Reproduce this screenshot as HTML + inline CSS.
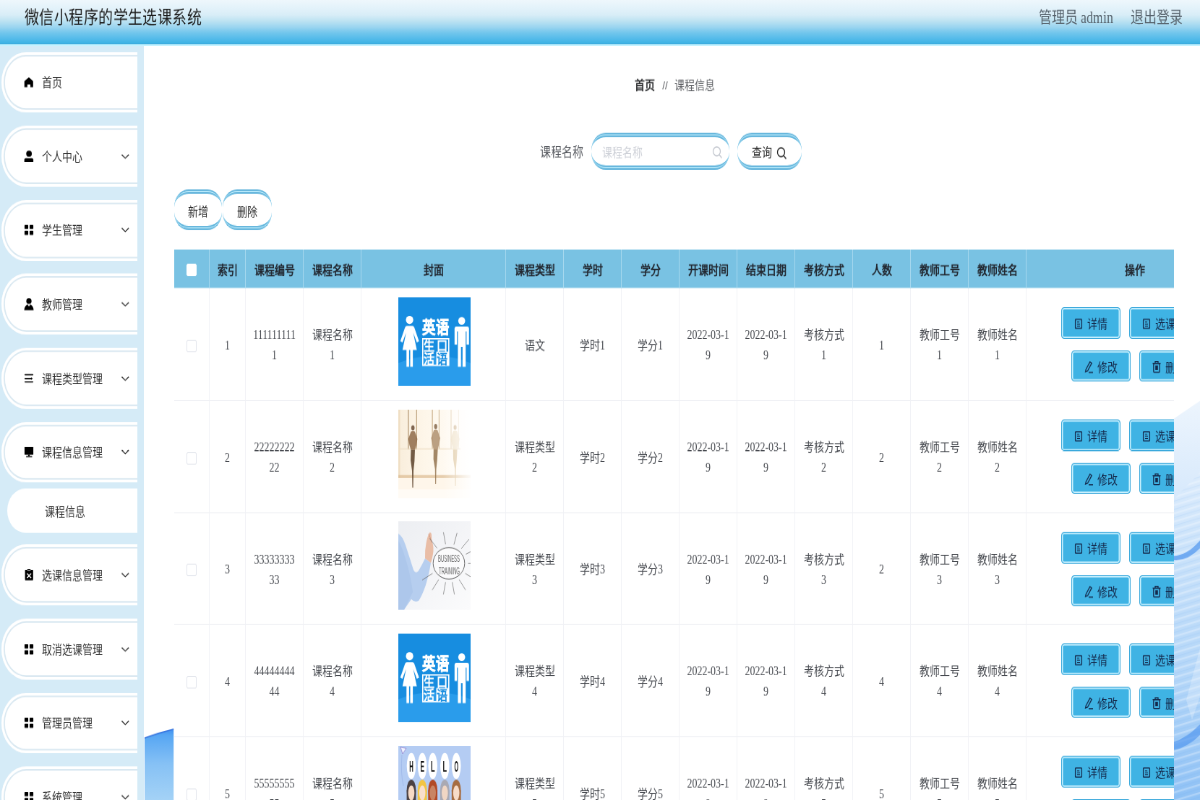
<!DOCTYPE html>
<html lang="zh-CN">
<head>
<meta charset="utf-8">
<title>微信小程序的学生选课系统</title>
<style>
html,body{margin:0;padding:0;width:1200px;height:800px;overflow:hidden;background:#fff;}
body{font-family:"Liberation Serif",serif;color:#333;}
#app{position:absolute;left:0;top:0;width:1660px;height:904px;transform-origin:0 0;transform:scale(0.72289,0.88496);will-change:transform;overflow:hidden;background:#fff;}
.sans{font-family:"Liberation Sans",sans-serif;}

/* header */
#hdr{position:absolute;left:0;top:0;width:1660px;height:50.3px;background:linear-gradient(180deg,#eef7fc 0%,#e3f2fa 18%,#d8edf7 34%,#bee3f2 47%,#9bd5f0 61%,#72c6ec 74%,#57bcea 86%,#3fb3e5 97%,#3aa6d8 100%);border-bottom:2px solid #c4f2ff;z-index:5;}
#hdr .title{position:absolute;left:34px;top:0;height:41px;line-height:41.6px;font-size:20px;letter-spacing:.42px;color:#1c1c1c;white-space:nowrap;}
#hdr .right{position:absolute;right:24px;top:0;height:41px;line-height:41px;font-size:18px;color:#56626c;white-space:nowrap;}
#hdr .right span{margin-left:24px;}

/* sidebar */
#side{position:absolute;left:0;top:51px;width:199px;height:853px;background:#d5ebf7;overflow:hidden;}
#side .menu{position:absolute;left:0;top:0;width:190px;height:853px;overflow:hidden;}
.mi{position:absolute;left:1.8px;width:240px;height:68.8px;box-sizing:border-box;background:#fff;border-radius:34.4px 0 0 34.4px;box-shadow:inset 0 0 0 3px #fff,inset 0 0 0 4.8px #d9e8f1;font-size:14px;color:#333;line-height:70px;white-space:nowrap;}
.mi svg{position:absolute;width:16.6px;height:13.56px;top:27.7px;}
.mi .ic{left:30px;}
.mi .tx{position:absolute;left:56.3px;top:0.5px;}
.mi .ar{left:163.5px;}
.smi{position:absolute;left:10px;width:240px;height:50px;background:#fff;border-radius:25px 0 0 25px;font-size:14px;color:#333;line-height:50px;}
.smi .tx{position:absolute;left:52px;top:1.7px;}

/* main */
#main{position:absolute;left:199px;top:51px;width:1461px;height:853px;background:#fff;overflow:hidden;}


#bgL{position:absolute;left:1.4px;top:770px;width:40.2px;height:90px;}
#bgR{position:absolute;left:1424px;top:380px;width:40px;height:480px;}
/* breadcrumb */
#bc{position:absolute;left:1px;top:32px;width:1467px;text-align:center;font-size:14px;line-height:28px;color:#606266;white-space:nowrap;}
#bc b{color:#303133;font-weight:bold;}
#bc i{font-style:normal;font-family:"Liberation Sans",sans-serif;color:#5f6166;margin:0 9px 0 10px;font-size:13.5px;}

/* search row */
#srch{position:absolute;left:0;top:99.2px;width:1461px;height:42px;}
#srch .lb{position:absolute;left:547.5px;top:1.2px;line-height:42px;font-size:15px;letter-spacing:.2px;color:#55585e;white-space:nowrap;}
.pill{box-sizing:border-box;border-style:double;border-color:#68b7dd;border-width:5.4px 0;border-radius:20px;background:linear-gradient(#fff,#fff) padding-box,linear-gradient(#bfeefd,#bfeefd) border-box;}
#srch .inp{position:absolute;left:618.5px;top:0;width:191.5px;height:42px;}
#srch .inp .ph{position:absolute;left:15px;top:0;line-height:35px;font-size:14px;color:#cdd0d7;font-family:"Liberation Sans",sans-serif;}
#srch .inp svg{position:absolute;left:167px;top:9px;width:15px;height:16px;}
#srch .btn{position:absolute;left:820.5px;top:0;width:89.5px;height:42px;font-family:"Liberation Sans",sans-serif;font-size:14px;color:#222;line-height:35px;}
#srch .btn span{position:absolute;left:20px;top:0;}
#srch .btn svg{position:absolute;left:54px;top:9.6px;width:15px;height:16px;}

/* add / delete */
#ops{position:absolute;left:41.7px;top:163.4px;height:46px;white-space:nowrap;}
#ops .b{position:absolute;top:0;width:66.8px;height:45.7px;font-family:"Liberation Sans",sans-serif;font-size:14px;color:#2a2a2a;line-height:40.5px;text-align:center;}

/* table */
#tw{position:absolute;left:41.5px;top:231.4px;width:1383.5px;height:640px;overflow:hidden;background:#fff;}
table{border-collapse:separate;border-spacing:0;table-layout:fixed;width:1479.6px;}
th,td{box-sizing:border-box;padding:0 10px;text-align:center;font-size:14px;overflow:hidden;}
th{height:44px;background:#79c2e3;color:#222831;font-weight:bold;border-right:1.4px solid #a6d8ee;border-bottom:1px solid #cfe9f5;white-space:nowrap;}
td{height:127px;padding-top:1.6px;color:#46494f;line-height:23px;border-right:1.4px solid #f1f2f6;border-bottom:1.2px solid #eff0f4;word-break:break-all;}
.cb{display:inline-block;box-sizing:border-box;width:14.5px;height:14px;background:#fff;border:1.4px solid #e2e5ec;border-radius:2px;vertical-align:middle;}
th .cb{border-color:#fff;}
tr.h126 td{height:126px;}
td:first-child{padding-top:0;}
td.img{padding:0;}
td.img svg{display:block;margin:0 auto;width:100px;height:100px;position:relative;top:-3.6px;left:1.2px;}
td.op{padding:0;position:relative;}
.ob{position:absolute;box-sizing:border-box;height:35.7px;width:82.5px;background:#3fb3e4;border:1.4px solid #3ba9dc;box-shadow:inset 0 0 0 1.5px #ccf2ff;border-radius:4px;font-family:"Liberation Sans",sans-serif;font-size:14px;color:#14294b;line-height:35.5px;white-space:nowrap;text-align:left;}
.ob svg{position:absolute;left:16.5px;top:10.6px;width:14px;height:15px;}
.ob span{position:absolute;left:35.6px;top:0.9px;}
</style>
</head>
<body>
<div id="app">
<svg width="0" height="0" style="position:absolute"><defs>
<g id="icSearch" fill="none" stroke-width="1.3"><circle cx="6.5" cy="7" r="5"/><path d="M10.2 11 L13.5 14.5"/></g>
<g id="icDoc" fill="none" stroke="#14294b" stroke-width="1.3"><rect x="2.6" y="1.8" width="8.8" height="10.4" rx=".8"/><path d="M5 4.9h3.2M5 7.2h4M5 9.5h4" stroke-width="1"/></g>
<g id="icEdit" fill="none" stroke="#14294b" stroke-width="1.3"><path d="M3.2 10.5 L8.8 1.8 L11.2 3.4 L5.6 12 L2.6 13 Z"/><path d="M7 13.8h6"/></g>
<g id="icDel" fill="none" stroke="#14294b" stroke-width="1.3"><path d="M1.5 3.6h11M5 3.4V1.6h4v1.8"/><rect x="2.8" y="3.6" width="8.4" height="10" rx="1.2"/><rect x="5.2" y="6" width="3.6" height="5" fill="#14294b" stroke="none"/></g>
<g id="icHome"><path d="M5.75 1 L10 5 V11 H7.25 V8.5 H4.25 V11 H1.25 V5 Z" fill="#000"/></g>
<g id="icUser" fill="#000"><ellipse cx="5.9" cy="3.3" rx="2.8" ry="3"/><path d="M1.2 11.9 V9.2 Q1.2 7.7 2.7 7.7 H8.7 Q10.2 7.7 10.2 9.2 V11.9 Z"/></g>
<g id="icGrid" fill="#000"><rect x="1.4" y="0.9" width="3.7" height="4.1" rx=".4"/><rect x="6.5" y="0.9" width="3.7" height="4.1" rx=".4"/><rect x="1.4" y="6.9" width="3.7" height="4.1" rx=".4"/><rect x="6.5" y="6.9" width="3.7" height="4.1" rx=".4"/></g>
<g id="icTeacher" fill="#000"><ellipse cx="5.8" cy="2.9" rx="2.6" ry="2.9"/><path d="M1.1 11.9 C1.2 9 2.4 7.2 4.5 6.2 L5.8 8.4 L7.1 6.2 C9.2 7.2 10.4 9 10.5 11.9 Z"/></g>
<g id="icList" fill="none" stroke="#000" stroke-width="1.3" stroke-linecap="round"><path d="M2 2.3H9.6M2 5.9H8M2 9.4H9.6"/><path d="M8 4.6 L9.6 5.9 L8 7.2 Z" fill="#000" stroke="none"/></g>
<g id="icMon" fill="#000"><rect x="1.4" y="0.8" width="8.8" height="7.9" rx=".5"/><rect x="5" y="8.5" width="1.6" height="1.7"/><rect x="2.9" y="10" width="6.2" height="1.1" rx=".5"/></g>
<g id="icClip"><rect x="1.9" y="0.9" width="8.1" height="10.3" rx=".5" fill="#000"/><rect x="4" y="-0.3" width="3.6" height="1.7" rx=".8" fill="#000" stroke="#fff" stroke-width=".5"/><path d="M3.9 4.5 L8 9 M8 4.5 L3.9 9" stroke="#fff" stroke-width="1.1" fill="none"/></g>
<g id="icChev"><path d="M2.5 4.2 L6 7.8 L9.5 4.2" fill="none" stroke="#333" stroke-width="1"/></g>
<g id="imgA"><rect width="100" height="100" fill="#178de0"/>
<ellipse cx="50" cy="104" rx="80" ry="38" fill="#2a9ceb"/>
<g fill="#fff"><ellipse cx="15.6" cy="25.6" rx="5.1" ry="4.6"/>
<path d="M11.8 32.3 H19.6 Q21.4 32.3 22.2 34.2 L28.6 49.6 L25.7 51 L20.6 40 L25.6 59.6 H20.1 V78.4 H16.5 V59.6 H14.9 V78.4 H11.3 V59.6 H5.8 L10.8 40 L5.7 51 L2.8 49.6 L9.2 34.2 Q10 32.3 11.8 32.3 Z"/>
<ellipse cx="87.7" cy="26.6" rx="4.8" ry="4.3"/>
<path d="M80.2 32.9 H95.4 Q97.8 32.9 97.8 35.3 V53.5 H94.4 V38.5 H93.2 V78.4 H88.9 V56 H86.7 V78.4 H82.4 V38.5 H81.2 V53.5 H77.8 V35.3 Q77.8 32.9 80.2 32.9 Z"/></g>
<g font-family="'Liberation Sans',sans-serif" font-weight="bold" text-anchor="middle">
<text x="42.3" y="41.3" font-size="19.5" fill="#fff" stroke="#fff" stroke-width=".5" textLength="18.6" lengthAdjust="spacingAndGlyphs">英</text>
<text x="61.5" y="41.3" font-size="19.5" fill="#fff" stroke="#fff" stroke-width=".5" textLength="18.6" lengthAdjust="spacingAndGlyphs">语</text>
<rect x="33.8" y="46.8" width="36" height="30" fill="none" stroke="#fff" stroke-width="1.6"/>
<rect x="52.5" y="61.5" width="17.3" height="15.3" fill="#fff"/>
<text x="43" y="60.2" font-size="15" fill="#fff" textLength="15" lengthAdjust="spacingAndGlyphs">生</text>
<text x="61" y="60.2" font-size="15" fill="#fff" textLength="15" lengthAdjust="spacingAndGlyphs">口</text>
<text x="43" y="74.8" font-size="15" fill="#fff" textLength="15" lengthAdjust="spacingAndGlyphs">活</text>
<text x="61" y="74.8" font-size="15" fill="#178de0" textLength="15" lengthAdjust="spacingAndGlyphs">语</text>
</g></g>
<g id="imgB"><rect width="100" height="100" fill="#fffdf9"/>
<linearGradient id="gB1" x1="0" x2="1"><stop offset="0" stop-color="#f6e7cf"/><stop offset=".35" stop-color="#fdf3e2"/><stop offset=".75" stop-color="#fffaf2"/><stop offset="1" stop-color="#ffffff"/></linearGradient>
<rect width="100" height="77" fill="url(#gB1)" opacity=".7"/>
<rect x="0" y="0" width="2.4" height="100" fill="#ecd9bd" opacity=".8"/>
<g stroke-width="1.1"><path d="M13.9 0V45" stroke="#a98a64"/><path d="M25.3 0V45" stroke="#b5976f"/><path d="M47.1 0V44" stroke="#c4a780"/><path d="M56.4 0V44" stroke="#d2ba98"/><path d="M73 0V44" stroke="#e4d1b4"/><path d="M83.4 0V44" stroke="#f0e4cf"/></g>
<rect x="0" y="43.6" width="86" height="1.3" fill="#efdfc4" opacity=".8"/>
<rect x="0" y="73.8" width="100" height="3.2" fill="#dcbb90" opacity=".7"/>
<rect x="0" y="77" width="100" height="23" fill="#fef6ea"/>
<rect x="0" y="90" width="100" height="10" fill="#fffbf5"/>
<g opacity=".85"><ellipse cx="20.2" cy="20.6" rx="2.3" ry="3" fill="#6a4d37"/>
<path d="M17.6 24.6 Q20.2 23.2 22.8 24.6 L26.4 33 L25 40 L23 45.5 H17.4 L15.4 40 L13.8 33 Z" fill="#8f6a48"/>
<path d="M17.4 45.5 H23 L22.4 58 L21 69 L20.6 88 H19.4 L19 69 L17 57 Z" fill="#5a4029"/>
<ellipse cx="51.7" cy="19" rx="2.2" ry="2.9" fill="#86684c"/>
<path d="M49.2 23 Q51.7 21.8 54.2 23 L58 32 L56.2 39.5 L54.6 45 H48.8 L47.2 39.5 L45.4 32 Z" fill="#b09170"/>
<path d="M48.8 45 H54.6 L53.8 57 L52.5 67 L52.2 84 H51.1 L50.8 67 L48.6 56 Z" fill="#94744f"/>
<ellipse cx="78.6" cy="20" rx="2.1" ry="2.8" fill="#cdb38e"/>
<path d="M76 24 Q78.6 22.8 81.2 24 L84.8 33 L83 40 L81.6 45 H75.8 L74.4 40 L72.4 33 Z" fill="#eedfc4"/>
<path d="M75.8 45 H81.6 L80.8 57 L79.7 67 L79.5 86 H78.5 L78.2 67 L76 56 Z" fill="#d9bd90"/></g>
<linearGradient id="gB2" x1="0" x2="1"><stop offset="0" stop-color="#fff" stop-opacity="0"/><stop offset="1" stop-color="#fff" stop-opacity=".9"/></linearGradient>
<rect x="62" y="0" width="38" height="100" fill="url(#gB2)"/>
</g>
<g id="imgC"><rect width="100" height="100" fill="#f4f5f7"/>
<linearGradient id="gC1" x1="0" x2="1" y1="0" y2="1"><stop offset="0" stop-color="#eceef2"/><stop offset="1" stop-color="#fbfbfc"/></linearGradient>
<rect width="100" height="100" fill="url(#gC1)"/>
<path d="M0 14 Q6 17 10 27 Q16 42 21 55 Q24 60 28 56 Q33 49 37 42 L45 47 Q43 58 38 72 Q33 84 28 90 Q22 92 18 88 L8 100 H0 Z" fill="#b6ceef"/>
<path d="M0 22 Q6 30 12 48 Q17 62 20 80 L8 100 H0 Z" fill="#a3c0e8" opacity=".5"/>
<path d="M37 42 Q36.5 33 38.5 25 Q40 17 43.5 12.5 Q45.5 12 46 15 Q45.6 20 47.2 24 Q49.4 30 48 37 Q46.8 43 45 47 Z" fill="#e9bda6"/>
<path d="M42 14 L46.5 24" stroke="#c98f78" stroke-width=".8" fill="none"/>
<ellipse cx="70" cy="47.5" rx="21.8" ry="17.8" fill="#fbfbfc" stroke="#5a5a5a" stroke-width=".9"/>
<path d="M65.4 26.1L62.4 12.4 M76.9 26.5L81.3 13.1 M87.1 30.9L98.0 20.2 M93.5 37.3L108.5 30.8 M96.6 47.5L113.6 47.5 M92.6 59.0L107.0 66.4 M84.1 65.9L93.1 77.7 M74.6 68.9L77.6 82.6 M65.4 68.9L62.4 82.6 M55.9 65.9L46.9 77.7 M47.4 59.0L33.0 66.4 M53.6 30.4L43.2 19.4" stroke="#707070" stroke-width=".7" fill="none"/>
<g font-family="'Liberation Sans',sans-serif" fill="#5f5f5f" text-anchor="middle"><text x="70" y="46.3" font-size="10.5" textLength="30" lengthAdjust="spacingAndGlyphs">BUSINESS</text><text x="70.5" y="59.6" font-size="10.5" textLength="29" lengthAdjust="spacingAndGlyphs">TRAINING</text></g>
</g>
<g id="imgD"><rect width="100" height="100" fill="#b4ccf3"/>
<path d="M3 1 L11 2.5 L6 9 Z" fill="#eef2ff" stroke="#8a78c8" stroke-width=".7"/>
<path d="M5 10 Q3 30 7 45" stroke="#8fa8e0" stroke-width=".5" fill="none"/>
<ellipse cx="18" cy="50" rx="6.4" ry="12" fill="#4b4143"/><rect x="11.6" y="50" width="12.8" height="20" fill="#4b4143"/><ellipse cx="18" cy="53" rx="4.3" ry="8.5" fill="#f6d9c4"/><rect x="11" y="64" width="14" height="36" rx="3" fill="#3f3a40"/><ellipse cx="33.2" cy="50" rx="6.4" ry="12" fill="#f2c543"/><rect x="26.800000000000004" y="50" width="12.8" height="20" fill="#f2c543"/><ellipse cx="33.2" cy="53" rx="4.3" ry="8.5" fill="#f9e0cc"/><rect x="26.200000000000003" y="64" width="14" height="36" rx="3" fill="#ffffff"/><ellipse cx="47.7" cy="50" rx="6.4" ry="12" fill="#b24a27"/><rect x="41.300000000000004" y="50" width="12.8" height="20" fill="#b24a27"/><ellipse cx="47.7" cy="53" rx="4.3" ry="8.5" fill="#c98464"/><rect x="40.7" y="64" width="14" height="36" rx="3" fill="#d9534a"/><ellipse cx="64.3" cy="50" rx="6.4" ry="12" fill="#a9a9b3"/><rect x="57.9" y="50" width="12.8" height="20" fill="#a9a9b3"/><ellipse cx="64.3" cy="53" rx="4.3" ry="8.5" fill="#f0d6c4"/><rect x="57.3" y="64" width="14" height="36" rx="3" fill="#5a5a66"/><ellipse cx="80.2" cy="50" rx="6.4" ry="12" fill="#a66d42"/><rect x="73.8" y="50" width="12.8" height="20" fill="#a66d42"/><ellipse cx="80.2" cy="53" rx="4.3" ry="8.5" fill="#f7dcc8"/><rect x="73.2" y="64" width="14" height="36" rx="3" fill="#ffffff"/>
<g font-family="'Liberation Sans',sans-serif" font-weight="bold" text-anchor="middle" fill="#111"><ellipse cx="18" cy="22.6" rx="6.3" ry="14.8" fill="#fff"/><text x="18" y="28.6" font-size="17" textLength="5.6" lengthAdjust="spacingAndGlyphs">H</text><ellipse cx="33.2" cy="22.6" rx="6.3" ry="14.8" fill="#fff"/><text x="33.2" y="28.6" font-size="17" textLength="5.6" lengthAdjust="spacingAndGlyphs">E</text><ellipse cx="47.7" cy="22.6" rx="6.3" ry="14.8" fill="#fff"/><text x="47.7" y="28.6" font-size="17" textLength="5.6" lengthAdjust="spacingAndGlyphs">L</text><ellipse cx="64.3" cy="22.6" rx="6.3" ry="14.8" fill="#fff"/><text x="64.3" y="28.6" font-size="17" textLength="5.6" lengthAdjust="spacingAndGlyphs">L</text><ellipse cx="80.2" cy="22.6" rx="6.3" ry="14.8" fill="#fff"/><text x="80.2" y="28.6" font-size="17" textLength="5.6" lengthAdjust="spacingAndGlyphs">O</text></g>
</g>
</defs></svg>


<div id="hdr">
  <div class="title">微信小程序的学生选课系统</div>
  <div class="right">管理员 admin<span>退出登录</span></div>
</div>

<div id="side"><div class="menu">
  <div class="mi" style="top:7.6px"><svg class="ic" viewBox="0 0 12 12" preserveAspectRatio="none"><use href="#icHome"/></svg><span class="tx">首页</span></div>
  <div class="mi" style="top:91.2px"><svg class="ic" viewBox="0 0 12 12" preserveAspectRatio="none"><use href="#icUser"/></svg><span class="tx">个人中心</span><svg class="ar" viewBox="0 0 12 12" preserveAspectRatio="none"><use href="#icChev"/></svg></div>
  <div class="mi" style="top:174.8px"><svg class="ic" viewBox="0 0 12 12" preserveAspectRatio="none"><use href="#icGrid"/></svg><span class="tx">学生管理</span><svg class="ar" viewBox="0 0 12 12" preserveAspectRatio="none"><use href="#icChev"/></svg></div>
  <div class="mi" style="top:258.4px"><svg class="ic" viewBox="0 0 12 12" preserveAspectRatio="none"><use href="#icTeacher"/></svg><span class="tx">教师管理</span><svg class="ar" viewBox="0 0 12 12" preserveAspectRatio="none"><use href="#icChev"/></svg></div>
  <div class="mi" style="top:342px"><svg class="ic" viewBox="0 0 12 12" preserveAspectRatio="none"><use href="#icList"/></svg><span class="tx">课程类型管理</span><svg class="ar" viewBox="0 0 12 12" preserveAspectRatio="none"><use href="#icChev"/></svg></div>
  <div class="mi" style="top:425.6px"><svg class="ic" viewBox="0 0 12 12" preserveAspectRatio="none"><use href="#icMon"/></svg><span class="tx">课程信息管理</span><svg class="ar" viewBox="0 0 12 12" preserveAspectRatio="none"><use href="#icChev"/></svg></div>
  <div class="smi" style="top:501.3px"><span class="tx">课程信息</span></div>
  <div class="mi" style="top:564.4px"><svg class="ic" viewBox="0 0 12 12" preserveAspectRatio="none"><use href="#icClip"/></svg><span class="tx">选课信息管理</span><svg class="ar" viewBox="0 0 12 12" preserveAspectRatio="none"><use href="#icChev"/></svg></div>
  <div class="mi" style="top:648px"><svg class="ic" viewBox="0 0 12 12" preserveAspectRatio="none"><use href="#icGrid"/></svg><span class="tx">取消选课管理</span><svg class="ar" viewBox="0 0 12 12" preserveAspectRatio="none"><use href="#icChev"/></svg></div>
  <div class="mi" style="top:731.6px"><svg class="ic" viewBox="0 0 12 12" preserveAspectRatio="none"><use href="#icGrid"/></svg><span class="tx">管理员管理</span><svg class="ar" viewBox="0 0 12 12" preserveAspectRatio="none"><use href="#icChev"/></svg></div>
  <div class="mi" style="top:815.2px"><svg class="ic" viewBox="0 0 12 12" preserveAspectRatio="none"><use href="#icGrid"/></svg><span class="tx">系统管理</span><svg class="ar" viewBox="0 0 12 12" preserveAspectRatio="none"><use href="#icChev"/></svg></div>
</div></div>

<div id="main">
  <svg id="bgL" viewBox="0 0 45 90" preserveAspectRatio="none"><defs><linearGradient id="gL" x1="0" x2="0" y1="0" y2="1"><stop offset="0" stop-color="#3f8ff0"/><stop offset=".08" stop-color="#56a6f3"/><stop offset=".45" stop-color="#86c1f5"/><stop offset="1" stop-color="#a9d5f6"/></linearGradient></defs><path d="M0 13 Q22 7 45 3 V90 H0 Z" fill="url(#gL)"/><path d="M0 13 Q22 7 45 3" stroke="#3a78e0" stroke-width="1.6" fill="none"/></svg>
<svg id="bgR" viewBox="0 0 40 480" preserveAspectRatio="none"><defs><linearGradient id="gR" x1="0" x2="0" y1="0" y2="1"><stop offset="0" stop-color="#edf5fd"/><stop offset=".2" stop-color="#dbebfc"/><stop offset=".42" stop-color="#c6e0fa"/><stop offset=".7" stop-color="#b2d5f8"/><stop offset="1" stop-color="#8dc0f5"/></linearGradient>
<pattern id="pR" width="40" height="9" patternUnits="userSpaceOnUse" patternTransform="rotate(-14)"><rect width="40" height="9" fill="none"/><rect y="0" width="40" height="2.2" fill="#fff" opacity=".28"/><rect y="5" width="40" height="1.2" fill="#5e9ff0" opacity=".10"/></pattern></defs>
<path d="M0 42.5 L37.0 22.1 L40 19.9 V480 H0 Z" fill="url(#gR)"/>
<path d="M0 134.0 L40 100.1 V480 H0 Z" fill="url(#pR)"/>
<path d="M0 197.3 Q20 197.3 40 176.9 V186.0 Q20 204.1 0 201.8 Z" fill="#4d94ee" opacity=".7"/>
<path d="M0 407.5 Q20 402.9 40 384.9 V397.3 Q20 414.2 0 416.5 Z" fill="#4d94ee" opacity=".65"/>
<path d="M18 360.0 L40 292.2 V348.7 L26 382.6 Z" fill="#fff" opacity=".25"/>
</svg>
  <div id="bc"><b>首页</b><i>//</i>课程信息</div>
  <div id="srch">
    <div class="lb">课程名称</div>
    <div class="inp pill"><span class="ph">课程名称</span><svg viewBox="0 0 15 16"><use href="#icSearch" stroke="#c3c7cf"/></svg></div>
    <div class="btn pill"><span>查询</span><svg viewBox="0 0 15 16"><use href="#icSearch" stroke="#222"/></svg></div>
  </div>
  <div id="ops"><div class="b pill" style="left:0">新增</div><div class="b pill" style="left:67.3px;width:67.8px">删除</div></div>
  <div id="tw">
<table><colgroup><col style="width:49.6px"><col style="width:50px"><col style="width:80px"><col style="width:80px"><col style="width:200px"><col style="width:80px"><col style="width:80px"><col style="width:80px"><col style="width:80px"><col style="width:80px"><col style="width:80px"><col style="width:80px"><col style="width:80px"><col style="width:80px"><col style="width:300px"></colgroup>
<thead><tr><th><span class="cb"></span></th><th>索引</th><th>课程编号</th><th>课程名称</th><th>封面</th><th>课程类型</th><th>学时</th><th>学分</th><th>开课时间</th><th>结束日期</th><th>考核方式</th><th>人数</th><th>教师工号</th><th>教师姓名</th><th>操作</th></tr></thead><tbody>
<tr class="h127"><td><span class="cb"></span></td><td>1</td><td>1111111111</td><td>课程名称1</td><td class="img"><svg viewBox="0 0 100 100"><use href="#imgA"/></svg></td><td>语文</td><td>学时1</td><td>学分1</td><td>2022-03-19</td><td>2022-03-19</td><td>考核方式1</td><td>1</td><td>教师工号1</td><td>教师姓名1</td><td class="op"><div class="ob" style="left:47.6px;top:21px"><svg viewBox="0 0 14 15"><use href="#icDoc"/></svg><span>详情</span></div><div class="ob" style="left:141.7px;top:21px;width:107px"><svg viewBox="0 0 14 15"><use href="#icDoc"/></svg><span>选课</span></div><div class="ob" style="left:61.5px;top:69.3px"><svg viewBox="0 0 14 15"><use href="#icEdit"/></svg><span>修改</span></div><div class="ob" style="left:155.7px;top:69.3px"><svg viewBox="0 0 14 15"><use href="#icDel"/></svg><span>删除</span></div></td></tr>
<tr class="h127"><td><span class="cb"></span></td><td>2</td><td>2222222222</td><td>课程名称2</td><td class="img"><svg viewBox="0 0 100 100"><use href="#imgB"/></svg></td><td>课程类型2</td><td>学时2</td><td>学分2</td><td>2022-03-19</td><td>2022-03-19</td><td>考核方式2</td><td>2</td><td>教师工号2</td><td>教师姓名2</td><td class="op"><div class="ob" style="left:47.6px;top:21px"><svg viewBox="0 0 14 15"><use href="#icDoc"/></svg><span>详情</span></div><div class="ob" style="left:141.7px;top:21px;width:107px"><svg viewBox="0 0 14 15"><use href="#icDoc"/></svg><span>选课</span></div><div class="ob" style="left:61.5px;top:69.3px"><svg viewBox="0 0 14 15"><use href="#icEdit"/></svg><span>修改</span></div><div class="ob" style="left:155.7px;top:69.3px"><svg viewBox="0 0 14 15"><use href="#icDel"/></svg><span>删除</span></div></td></tr>
<tr class="h126"><td><span class="cb"></span></td><td>3</td><td>3333333333</td><td>课程名称3</td><td class="img"><svg viewBox="0 0 100 100"><use href="#imgC"/></svg></td><td>课程类型3</td><td>学时3</td><td>学分3</td><td>2022-03-19</td><td>2022-03-19</td><td>考核方式3</td><td>2</td><td>教师工号3</td><td>教师姓名3</td><td class="op"><div class="ob" style="left:47.6px;top:21px"><svg viewBox="0 0 14 15"><use href="#icDoc"/></svg><span>详情</span></div><div class="ob" style="left:141.7px;top:21px;width:107px"><svg viewBox="0 0 14 15"><use href="#icDoc"/></svg><span>选课</span></div><div class="ob" style="left:61.5px;top:69.3px"><svg viewBox="0 0 14 15"><use href="#icEdit"/></svg><span>修改</span></div><div class="ob" style="left:155.7px;top:69.3px"><svg viewBox="0 0 14 15"><use href="#icDel"/></svg><span>删除</span></div></td></tr>
<tr class="h127"><td><span class="cb"></span></td><td>4</td><td>4444444444</td><td>课程名称4</td><td class="img"><svg viewBox="0 0 100 100"><use href="#imgA"/></svg></td><td>课程类型4</td><td>学时4</td><td>学分4</td><td>2022-03-19</td><td>2022-03-19</td><td>考核方式4</td><td>4</td><td>教师工号4</td><td>教师姓名4</td><td class="op"><div class="ob" style="left:47.6px;top:21px"><svg viewBox="0 0 14 15"><use href="#icDoc"/></svg><span>详情</span></div><div class="ob" style="left:141.7px;top:21px;width:107px"><svg viewBox="0 0 14 15"><use href="#icDoc"/></svg><span>选课</span></div><div class="ob" style="left:61.5px;top:69.3px"><svg viewBox="0 0 14 15"><use href="#icEdit"/></svg><span>修改</span></div><div class="ob" style="left:155.7px;top:69.3px"><svg viewBox="0 0 14 15"><use href="#icDel"/></svg><span>删除</span></div></td></tr>
<tr class="h127"><td><span class="cb"></span></td><td>5</td><td>5555555555</td><td>课程名称5</td><td class="img"><svg viewBox="0 0 100 100"><use href="#imgD"/></svg></td><td>课程类型5</td><td>学时5</td><td>学分5</td><td>2022-03-19</td><td>2022-03-19</td><td>考核方式5</td><td>5</td><td>教师工号5</td><td>教师姓名5</td><td class="op"><div class="ob" style="left:47.6px;top:21px"><svg viewBox="0 0 14 15"><use href="#icDoc"/></svg><span>详情</span></div><div class="ob" style="left:141.7px;top:21px;width:107px"><svg viewBox="0 0 14 15"><use href="#icDoc"/></svg><span>选课</span></div><div class="ob" style="left:61.5px;top:69.3px"><svg viewBox="0 0 14 15"><use href="#icEdit"/></svg><span>修改</span></div><div class="ob" style="left:155.7px;top:69.3px"><svg viewBox="0 0 14 15"><use href="#icDel"/></svg><span>删除</span></div></td></tr>
</tbody></table>
  </div>
</div>

</div>
</body>
</html>
